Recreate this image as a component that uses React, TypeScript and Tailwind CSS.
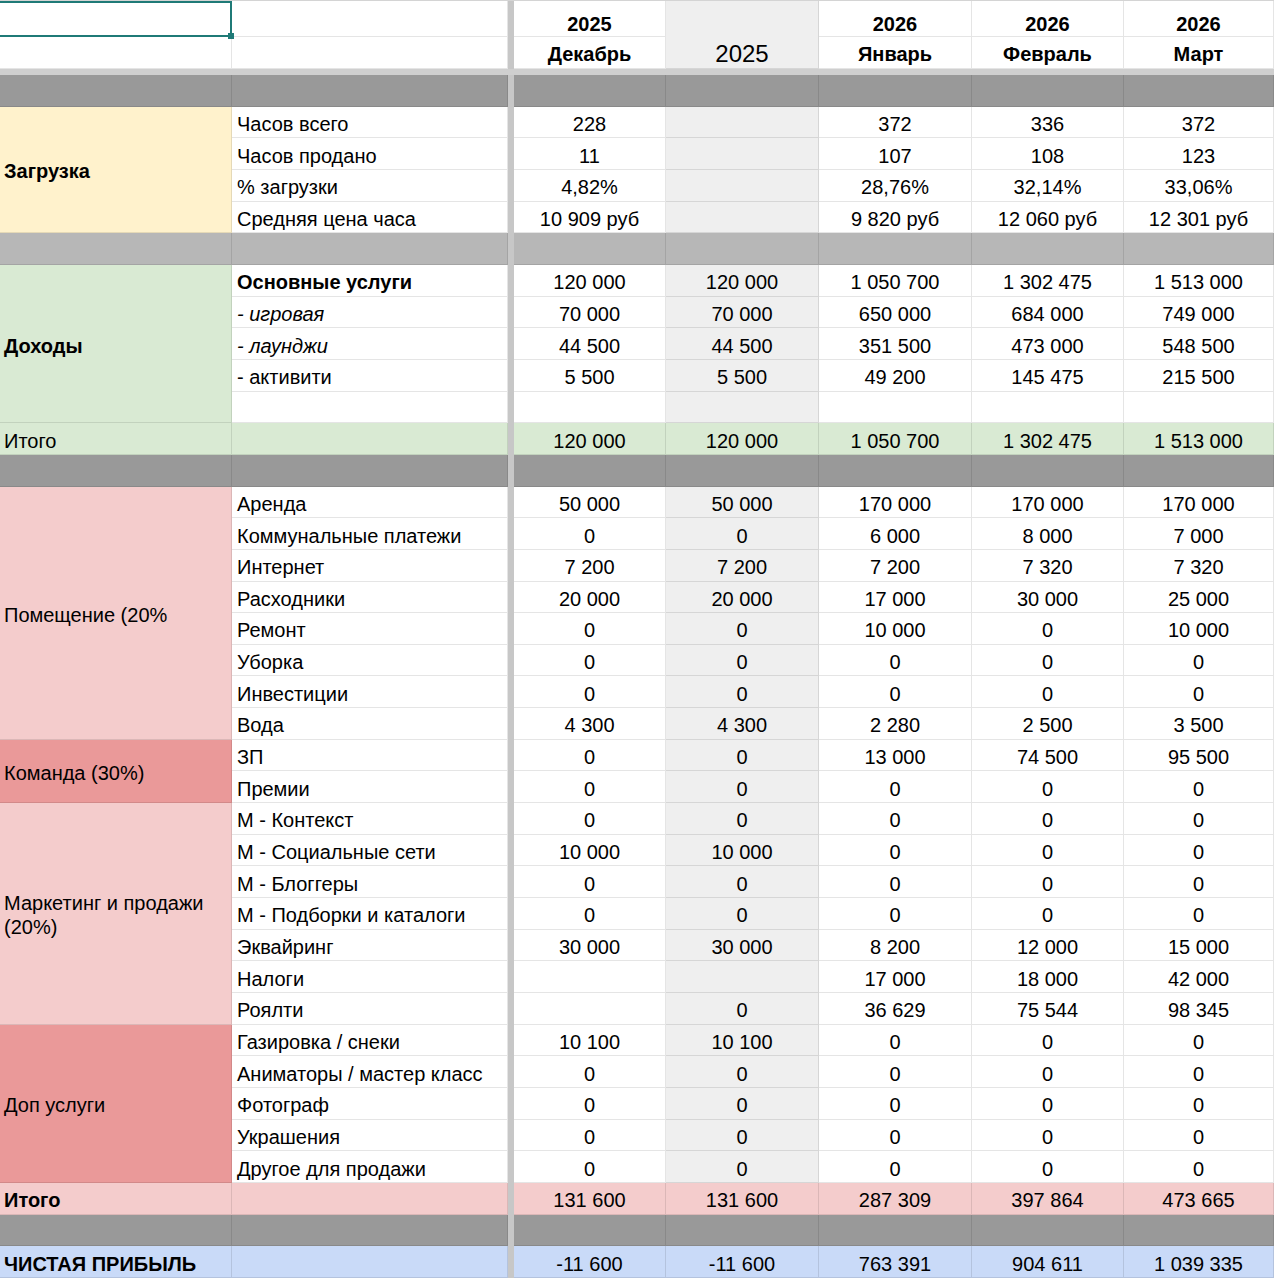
import clsx from "clsx";

type Line = { label: string; vals: string[]; b?: boolean; i?: boolean };
type Group = { title: string; span: string; bg: string; wrap?: boolean; bold?: boolean; lines: Line[] };

const z5 = ["0", "0", "0", "0", "0"];

const load: Group = {
  title: "Загрузка",
  span: "row-span-4",
  bg: "bg-[#fff2cc]",
  bold: true,
  lines: [
    { label: "Часов всего", vals: ["228", "", "372", "336", "372"] },
    { label: "Часов продано", vals: ["11", "", "107", "108", "123"] },
    { label: "% загрузки", vals: ["4,82%", "", "28,76%", "32,14%", "33,06%"] },
    { label: "Средняя цена часа", vals: ["10 909 руб", "", "9 820 руб", "12 060 руб", "12 301 руб"] },
  ],
};

const income: Group = {
  title: "Доходы",
  span: "row-span-5",
  bg: "bg-[#d9ead3]",
  bold: true,
  lines: [
    { label: "Основные услуги", b: true, vals: ["120 000", "120 000", "1 050 700", "1 302 475", "1 513 000"] },
    { label: "- игровая", i: true, vals: ["70 000", "70 000", "650 000", "684 000", "749 000"] },
    { label: "- лаунджи", i: true, vals: ["44 500", "44 500", "351 500", "473 000", "548 500"] },
    { label: "- активити", vals: ["5 500", "5 500", "49 200", "145 475", "215 500"] },
    { label: "", vals: ["", "", "", "", ""] },
  ],
};

const costs: Group[] = [
  {
    title: "Помещение (20%",
    span: "row-span-8",
    bg: "bg-[#f4cccc]",
    lines: [
      { label: "Аренда", vals: ["50 000", "50 000", "170 000", "170 000", "170 000"] },
      { label: "Коммунальные платежи", vals: ["0", "0", "6 000", "8 000", "7 000"] },
      { label: "Интернет", vals: ["7 200", "7 200", "7 200", "7 320", "7 320"] },
      { label: "Расходники", vals: ["20 000", "20 000", "17 000", "30 000", "25 000"] },
      { label: "Ремонт", vals: ["0", "0", "10 000", "0", "10 000"] },
      { label: "Уборка", vals: z5 },
      { label: "Инвестиции", vals: z5 },
      { label: "Вода", vals: ["4 300", "4 300", "2 280", "2 500", "3 500"] },
    ],
  },
  {
    title: "Команда (30%)",
    span: "row-span-2",
    bg: "bg-[#ea9999]",
    lines: [
      { label: "ЗП", vals: ["0", "0", "13 000", "74 500", "95 500"] },
      { label: "Премии", vals: z5 },
    ],
  },
  {
    title: "Маркетинг и продажи (20%)",
    span: "row-span-7",
    bg: "bg-[#f4cccc]",
    wrap: true,
    lines: [
      { label: "М - Контекст", vals: z5 },
      { label: "М - Социальные сети", vals: ["10 000", "10 000", "0", "0", "0"] },
      { label: "М - Блоггеры", vals: z5 },
      { label: "М - Подборки и каталоги", vals: z5 },
      { label: "Эквайринг", vals: ["30 000", "30 000", "8 200", "12 000", "15 000"] },
      { label: "Налоги", vals: ["", "", "17 000", "18 000", "42 000"] },
      { label: "Роялти", vals: ["", "0", "36 629", "75 544", "98 345"] },
    ],
  },
  {
    title: "Доп услуги",
    span: "row-span-5",
    bg: "bg-[#ea9999]",
    lines: [
      { label: "Газировка / снеки", vals: ["10 100", "10 100", "0", "0", "0"] },
      { label: "Аниматоры / мастер класс", vals: z5 },
      { label: "Фотограф", vals: z5 },
      { label: "Украшения", vals: z5 },
      { label: "Другое для продажи", vals: z5 },
    ],
  },
];

const cellBase = "flex overflow-hidden border-b border-r border-black/10";

// centered cells sit a touch low in the sheet, hence pt-1
function Cell({ className, wrap, top, children }: { className?: string; wrap?: boolean; top?: boolean; children?: React.ReactNode }) {
  return (
    <div className={clsx(cellBase, wrap ? "whitespace-normal" : "whitespace-nowrap", !top && "items-center pt-1", className)}>
      {children}
    </div>
  );
}

function Values({ vals, bg }: { vals: string[]; bg?: string }) {
  return (
    <>
      {vals.map((v, k) => (
        <Cell key={k} className={clsx("justify-center", bg ?? (k === 1 ? "bg-[#efefef]" : "bg-white"))}>
          {v}
        </Cell>
      ))}
    </>
  );
}

function GrayRow({ tone }: { tone: string }) {
  return (
    <>
      {Array.from({ length: 7 }).map((_, k) => (
        <Cell key={k} className={tone} />
      ))}
    </>
  );
}

function Section({ g }: { g: Group }) {
  return (
    <>
      {g.lines.map((l, idx) => (
        <SectionRow key={idx} g={g} l={l} first={idx === 0} />
      ))}
    </>
  );
}

function SectionRow({ g, l, first }: { g: Group; l: Line; first: boolean }) {
  return (
    <>
      {first && (
        <Cell wrap={g.wrap} className={clsx(g.span, g.bg, "px-1", g.bold && "font-bold", g.wrap && "leading-6")}>
          {g.title}
        </Cell>
      )}
      <Cell className={clsx("bg-white pl-[5px]", l.b && "font-bold", l.i && "italic")}>{l.label}</Cell>
      <Values vals={l.vals} />
    </>
  );
}

function TotalRow({ label, vals, bg, bold }: { label: string; vals: string[]; bg: string; bold?: boolean }) {
  return (
    <>
      <Cell className={clsx(bg, "px-1", bold && "font-bold")}>{label}</Cell>
      <Cell className={bg} />
      <Values vals={vals} bg={bg} />
    </>
  );
}

export default function App() {
  return (
    <div className="min-h-screen bg-white font-['Liberation_Sans',Arial,sans-serif] text-[20px] text-black">
      <div className="grid grid-cols-[232px_276px_6px_152px_153px_153px_152px_150px] grid-rows-[36px_32px_6px_repeat(38,31.67px)] border-t border-[#d4d4d4]">
        <div className="col-start-3 row-span-full row-start-1 bg-[#c7c7c7]" />
        <div className="col-span-full row-start-3 bg-[#cfcfcf]" />

        {/* header */}
        <div className="relative border-y-2 border-r-2 border-[#1f7a77] bg-white">
          <span className="absolute -bottom-[4px] -right-[4px] h-[6px] w-[6px] bg-[#1f7a77]" />
        </div>
        <Cell top className="bg-white" />
        <Cell top className="items-end justify-center pb-[2px] font-bold leading-5">2025</Cell>
        <Cell top className="row-span-2 items-end justify-center bg-[#efefef] pb-[4px] text-[24px] leading-5">2025</Cell>
        <Cell top className="items-end justify-center pb-[2px] font-bold leading-5">2026</Cell>
        <Cell top className="items-end justify-center pb-[2px] font-bold leading-5">2026</Cell>
        <Cell top className="items-end justify-center pb-[2px] font-bold leading-5">2026</Cell>

        <Cell top className="bg-white" />
        <Cell top className="bg-white" />
        <Cell top className="items-end justify-center pb-[2px] font-bold leading-6">Декабрь</Cell>
        <Cell top className="items-end justify-center pb-[2px] font-bold leading-6">Январь</Cell>
        <Cell top className="items-end justify-center pb-[2px] font-bold leading-6">Февраль</Cell>
        <Cell top className="items-end justify-center pb-[2px] font-bold leading-6">Март</Cell>

        <GrayRow tone="bg-[#999999]" />
        <Section g={load} />
        <GrayRow tone="bg-[#b7b7b7]" />
        <Section g={income} />
        <TotalRow label="Итого" bg="bg-[#d9ead3]" vals={["120 000", "120 000", "1 050 700", "1 302 475", "1 513 000"]} />
        <GrayRow tone="bg-[#999999]" />
        {costs.map((g) => (
          <Section key={g.title} g={g} />
        ))}
        <TotalRow label="Итого" bold bg="bg-[#f4cccc]" vals={["131 600", "131 600", "287 309", "397 864", "473 665"]} />
        <GrayRow tone="bg-[#999999]" />
        <TotalRow label="ЧИСТАЯ ПРИБЫЛЬ" bold bg="bg-[#c9daf8]" vals={["-11 600", "-11 600", "763 391", "904 611", "1 039 335"]} />
      </div>
    </div>
  );
}
